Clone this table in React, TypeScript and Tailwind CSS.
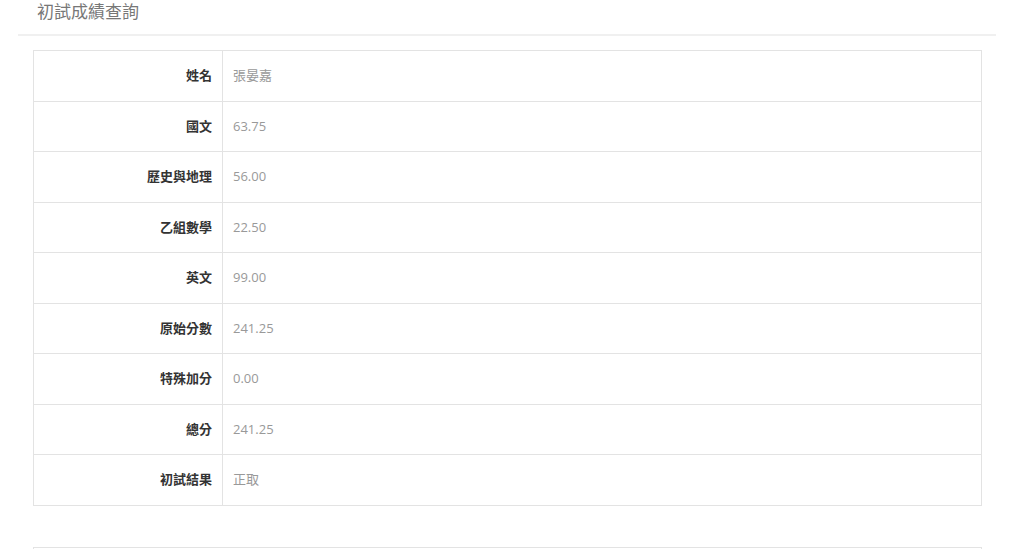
import React from "react";

const rows: [string, string][] = [
  ["姓名", "張晏嘉"],
  ["國文", "63.75"],
  ["歷史與地理", "56.00"],
  ["乙組數學", "22.50"],
  ["英文", "99.00"],
  ["原始分數", "241.25"],
  ["特殊加分", "0.00"],
  ["總分", "241.25"],
  ["初試結果", "正取"],
];

const App = () => {
  return (
    <div
      className="h-[549px] w-[1024px] overflow-hidden bg-white"
      style={{ fontFamily: '"Open Sans", "Noto Sans CJK TC", sans-serif' }}
    >
      {/* Header */}
      <div className="ml-[18px] mr-[28px] border-b-2 border-[#f0f0f0] pl-[19px] pt-[1px] pb-[11px]">
        <h1 className="text-[17px] leading-[22px] font-normal text-[#777]">初試成績查詢</h1>
      </div>

      {/* Score table */}
      <div className="mx-[33px] mt-[14px] w-[949px]">
        <table className="w-full border-collapse border border-[#e3e3e3] text-[13px]">
          <tbody>
            {rows.map(([label, value]) => (
              <tr key={label} className="h-[50.5px]">
                <td className="w-[189px] border border-[#e3e3e3] pr-[10px] text-right font-bold text-[#333]">
                  {label}
                </td>
                <td className="border border-[#e3e3e3] pl-[10px] text-[#999]">{value}</td>
              </tr>
            ))}
          </tbody>
        </table>
      </div>

      {/* Next panel */}
      <div className="mx-[33px] mt-[41px] h-[40px] w-[949px] border border-[#e3e3e3]"></div>
    </div>
  );
};

export default App;
